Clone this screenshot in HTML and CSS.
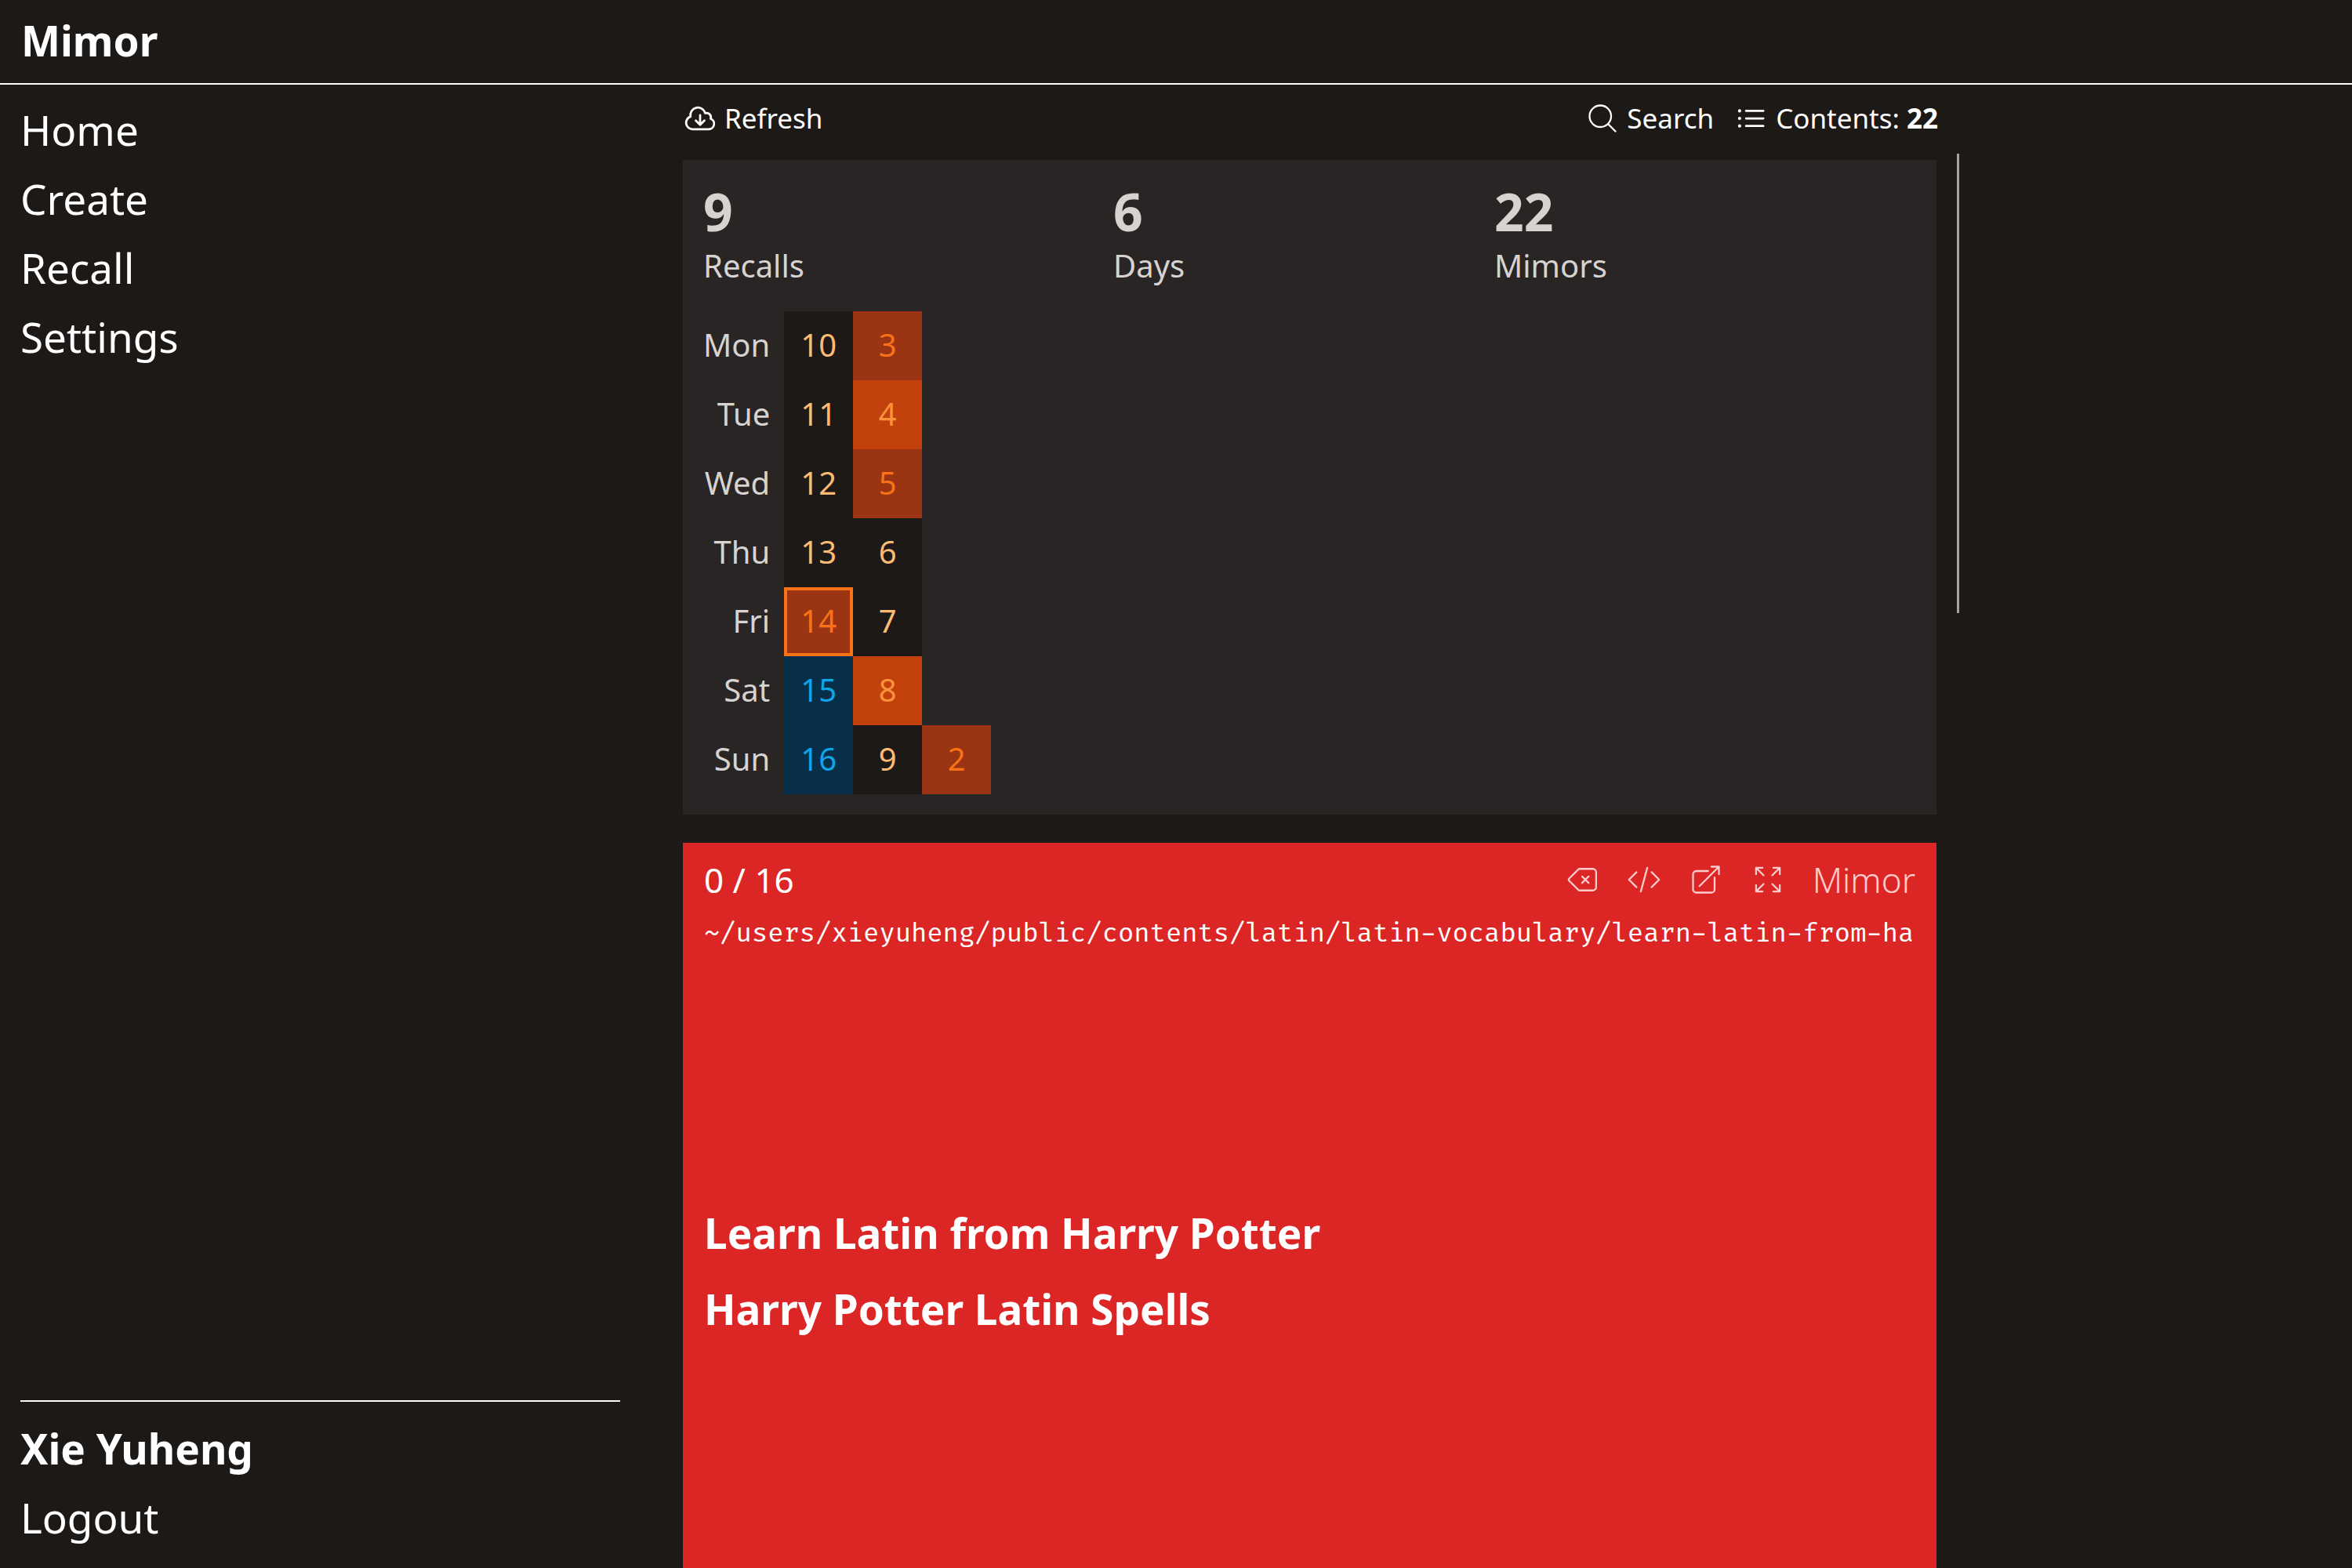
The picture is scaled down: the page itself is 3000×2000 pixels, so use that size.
FILE: index.html
```html
<!DOCTYPE html>
<html lang="en">
<head>
<meta charset="utf-8">
<title>Mimor</title>
<link rel="stylesheet" href="styles.css">
</head>
<body>
<div class="app">
  <header class="topbar"><a class="brand" href="#">Mimor</a></header>
  <div class="layout">
    <aside class="sidebar">
      <nav class="nav">
        <a href="#">Home</a>
        <a href="#">Create</a>
        <a href="#">Recall</a>
        <a href="#">Settings</a>
      </nav>
      <div class="account">
        <a class="user" href="#">Xie Yuheng</a>
        <button class="logout" type="button">Logout</button>
      </div>
    </aside>
    <main class="main">
      <div class="toolbar">
        <button class="tool" type="button">
          <svg class="icon" viewBox="0 0 24 24" stroke-width="1.5"><path d="M12 9.75v6.75m0 0l-3-3m3 3l3-3m-8.25 6a4.5 4.5 0 01-1.41-8.775 5.25 5.25 0 0110.233-2.33 3 3 0 013.758 3.848A3.752 3.752 0 0118 19.5H6.75z"/></svg>
          <span>Refresh</span>
        </button>
        <div class="tools">
          <a class="tool" href="#">
            <svg class="icon" viewBox="0 0 24 24" stroke-width="1.25"><path d="M21 21l-5.197-5.197m0 0A7.5 7.5 0 105.196 5.196a7.5 7.5 0 0010.607 10.607z"/></svg>
            <span>Search</span>
          </a>
          <a class="tool" href="#">
            <svg class="icon" viewBox="0 0 24 24" stroke-width="1.5"><path d="M8.25 6.75h12M8.25 12h12m-12 5.25h12M3.75 6.75h.007v.008H3.75V6.75zm.375 0a.375.375 0 11-.75 0 .375.375 0 01.75 0zM3.75 12h.007v.008H3.75V12zm.375 0a.375.375 0 11-.75 0 .375.375 0 01.75 0zm-.375 5.25h.007v.008H3.75v-.008zm.375 0a.375.375 0 11-.75 0 .375.375 0 01.75 0z"/></svg>
            <span>Contents: <b>22</b></span>
          </a>
        </div>
      </div>
      <div class="feed">
        <div class="cards">
          <section class="summary">
            <dl class="stats">
              <div class="stat"><dt>Recalls</dt><dd>9</dd></div>
              <div class="stat"><dt>Days</dt><dd>6</dd></div>
              <div class="stat"><dt>Mimors</dt><dd>22</dd></div>
            </dl>
            <table class="calendar">
              <tbody>
                <tr><th scope="row">Mon</th><td class="idle">10</td><td class="low">3</td><td></td></tr>
                <tr><th scope="row">Tue</th><td class="idle">11</td><td class="high">4</td><td></td></tr>
                <tr><th scope="row">Wed</th><td class="idle">12</td><td class="low">5</td><td></td></tr>
                <tr><th scope="row">Thu</th><td class="idle">13</td><td class="idle">6</td><td></td></tr>
                <tr><th scope="row">Fri</th><td class="low today">14</td><td class="idle">7</td><td></td></tr>
                <tr><th scope="row">Sat</th><td class="future">15</td><td class="high">8</td><td></td></tr>
                <tr><th scope="row">Sun</th><td class="future">16</td><td class="idle">9</td><td class="low">2</td></tr>
              </tbody>
            </table>
          </section>
          <article class="mimor">
            <div class="mimor-head">
              <span class="progress">0 / 16</span>
              <div class="actions">
                <button type="button" aria-label="Delete"><svg class="icon" viewBox="0 0 24 24" stroke-width="1.25"><path d="M12 9.75L14.25 12m0 0l2.25 2.25M14.25 12l2.25-2.25M14.25 12L12 14.25m-2.58 4.92l-6.375-6.375a1.125 1.125 0 010-1.59L9.42 4.83c.211-.211.498-.33.796-.33H19.5a2.25 2.25 0 012.25 2.25v10.5a2.25 2.25 0 01-2.25 2.25h-9.284c-.298 0-.585-.119-.796-.33z"/></svg></button>
                <button type="button" aria-label="Source"><svg class="icon" viewBox="0 0 24 24" stroke-width="1.25"><path d="M17.25 6.75L22.5 12l-5.25 5.25m-10.5 0L1.5 12l5.25-5.25m7.5-3l-4.5 16.5"/></svg></button>
                <a href="#" aria-label="Open"><svg class="icon" viewBox="0 0 24 24" stroke-width="1.25"><path d="M13.5 6H5.25A2.25 2.25 0 003 8.25v10.5A2.25 2.25 0 005.25 21h10.5A2.25 2.25 0 0018 18.75V10.5m-10.5 6L21 3m0 0h-5.25M21 3v5.25"/></svg></a>
                <button type="button" aria-label="Fullscreen"><svg class="icon" viewBox="0 0 24 24" stroke-width="1.25"><path d="M3.75 3.75v4.5m0-4.5h4.5m-4.5 0L9 9M3.75 20.25v-4.5m0 4.5h4.5m-4.5 0L9 15M20.25 3.75h-4.5m4.5 0v4.5m0-4.5L15 9m5.25 11.25h-4.5m4.5 0v-4.5m0 4.5L15 15"/></svg></button>
                <a class="kind" href="#">Mimor</a>
              </div>
            </div>
            <div class="path">~/users/xieyuheng/public/contents/latin/latin-vocabulary/learn-latin-from-ha</div>
            <div class="mimor-body">
              <h1>Learn Latin from Harry Potter</h1>
              <h2>Harry Potter Latin Spells</h2>
            </div>
          </article>
        </div>
        <div class="scrollbar" aria-hidden="true"><div class="thumb"></div></div>
      </div>
    </main>
  </div>
</div>
</body>
</html>
```
FILE: styles.css
```css
* { box-sizing: border-box; margin: 0; padding: 0; }

body {
  background: #1c1917;
  color: #fff;
  font-family: "Noto Sans", sans-serif;
  font-size: 35px;
  line-height: 53px;
}

a { color: inherit; text-decoration: none; }
button { background: none; border: 0; color: inherit; font: inherit; cursor: pointer; }

.app { display: flex; flex-direction: column; height: 100vh; overflow: hidden; }

.topbar {
  flex: none;
  padding: 17px 27px 19px;
  border-bottom: 2px solid #fff;
}
.brand { display: block; font-size: 53px; line-height: 70px; font-weight: 700; }

.layout { flex: 1; min-height: 0; display: flex; }

.sidebar {
  width: 29%;
  flex: none;
  display: flex;
  flex-direction: column;
  justify-content: space-between;
  padding: 23px 79px 29px 26px;
  font-size: 53px;
  line-height: 70px;
}
.nav { display: flex; flex-direction: column; gap: 18px; }
.account {
  display: flex;
  flex-direction: column;
  align-items: flex-start;
  gap: 18px;
  padding-top: 25px;
  border-top: 2px solid #fff;
}
.user { font-weight: 700; }
.logout { line-height: 70px; }

.main { flex: 1; min-width: 0; display: flex; flex-direction: column; }

.toolbar {
  flex: none;
  width: 1602px;
  max-width: 100%;
  display: flex;
  justify-content: space-between;
  padding: 16px 0 19px 1px;
}
.tools { display: flex; gap: 26px; }
.tool { display: flex; align-items: center; gap: 9px; }

.icon {
  display: block;
  width: 44px;
  height: 44px;
  fill: none;
  stroke: currentColor;
  stroke-linecap: round;
  stroke-linejoin: round;
}

.feed {
  flex: 1;
  min-height: 0;
  display: flex;
  gap: 26px;
}
.cards {
  flex: none;
  width: 1600px;
  display: flex;
  flex-direction: column;
  gap: 36px;
  padding: 8px 0 0 1px;
}
.scrollbar { flex: none; width: 3px; height: 100%; }
.thumb { height: 32.5%; background: #a8a29e; }

.summary { flex: none; padding: 26px; background: #292524; color: #d6d3d1; }
.stats {
  display: grid;
  grid-template-columns: 523px 486px 1fr;
  padding-bottom: 27px;
}
.stat { display: flex; flex-direction: column-reverse; }
.stat dt { font-size: 40px; line-height: 62px; }
.stat dd { font-size: 66px; line-height: 78px; font-weight: 700; }

.calendar { border-collapse: collapse; font-size: 40px; line-height: 62px; }
.calendar th { padding: 0 18px 2px 0; font-weight: 400; text-align: right; }
.calendar td { width: 88px; height: 88px; padding-bottom: 2px; text-align: center; }
.idle { background: #1c1917; color: #fdba74; }
.low { background: #9a3412; color: #f97316; }
.high { background: #c2410c; color: #fb923c; }
.future { background: #082f49; color: #0ea5e9; }
.today { box-shadow: inset 0 0 0 4px #f97316; }

.mimor {
  flex: 1;
  display: flex;
  flex-direction: column;
  padding: 16px 27px;
  background: #dc2626;
}
.mimor-head { display: flex; align-items: center; justify-content: space-between; font-size: 44px; line-height: 62px; }
.actions { display: flex; align-items: center; gap: 35px; color: #fecaca; }
.kind { font-weight: 300; }
.path {
  padding-top: 12px;
  font-family: "Fira Code", "Liberation Mono", monospace;
  font-size: 33px;
  line-height: 53px;
  white-space: nowrap;
  overflow: hidden;
}
.mimor-body {
  display: flex;
  flex-direction: column;
  gap: 27px;
  padding-top: 320px;
}
.mimor-body h1,
.mimor-body h2 { font-size: 53px; line-height: 70px; font-weight: 700; }
```
